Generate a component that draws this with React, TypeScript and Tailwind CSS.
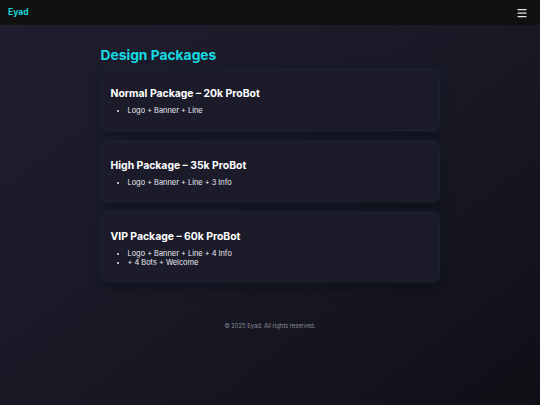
import { Menu } from 'lucide-react';

const packages = [
  { title: 'Normal Package – 20k ProBot', items: ['Logo + Banner + Line'] },
  { title: 'High Package – 35k ProBot', items: ['Logo + Banner + Line + 3 Info'] },
  { title: 'VIP Package – 60k ProBot', items: ['Logo + Banner + Line + 4 Info', '+ 4 Bots + Welcome'] },
];

const PackageCard = ({ title, items }: { title: string; items: string[] }) => {
  return (
    <div className="rounded-[7px] border border-[#1f2a36]/50 bg-[#1b1b2a] px-[9px] pb-[14px] pt-[16px] shadow-[0_0_8px_rgba(0,200,220,0.07),0_4px_12px_rgba(0,0,0,0.35)]">
      <h3 className="text-[10.4px] font-bold leading-[16px] text-white">{title}</h3>
      <ul className="mt-[5px] list-disc pl-[17px] text-[7.4px] leading-[8.5px] text-[#ececf2]">
        {items.map((item) => (
          <li key={item}>{item}</li>
        ))}
      </ul>
    </div>
  );
};

export default function App() {
  return (
    <div className="flex min-h-[405px] flex-col bg-gradient-to-br from-[#1f1e2f] via-[#191926] to-[#0f1016] font-['Inter','Liberation_Sans',sans-serif]">
      <nav className="flex h-[25px] items-center justify-between bg-[#111111] pl-[8px] pr-[12px]">
        <span className="text-[8.5px] font-bold text-[#19d3da]">Eyad</span>
        <Menu className="h-[12px] w-[12px] text-[#e5e5e5]" strokeWidth={2.5} />
      </nav>

      <main className="mx-auto w-[339px] pt-[21px]">
        <h2 className="text-[13.8px] font-bold leading-[18px] text-[#14dbe3]">Design Packages</h2>
        <div className="mt-[5px] flex flex-col gap-[10px]">
          {packages.map((pkg) => (
            <PackageCard key={pkg.title} title={pkg.title} items={pkg.items} />
          ))}
        </div>
      </main>

      <footer className="mt-[39px] text-center text-[5.8px] leading-[9px] text-[#8a8a96]">© 2025 Eyad. All rights reserved.</footer>
    </div>
  );
}
